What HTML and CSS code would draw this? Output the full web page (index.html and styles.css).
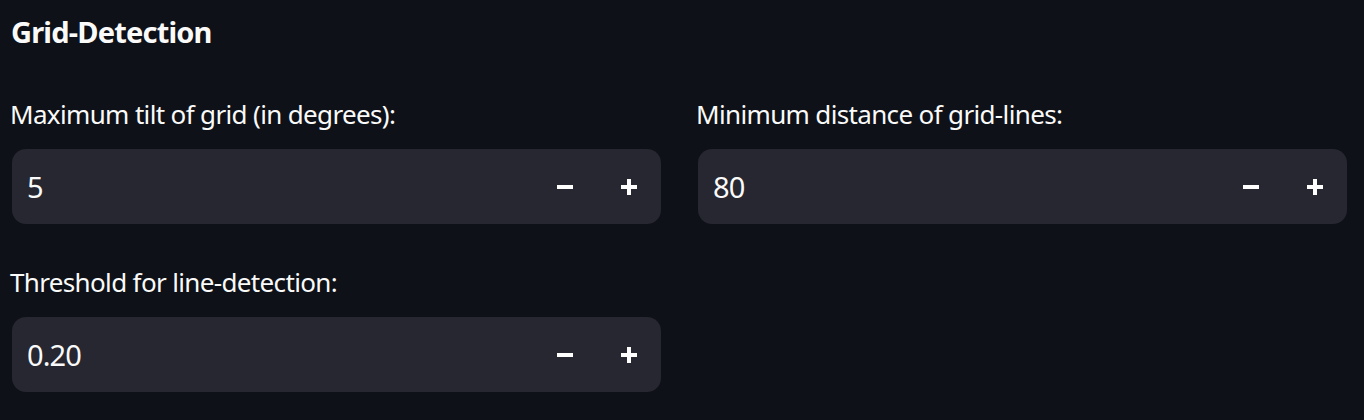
FILE: index.html
```html
<!DOCTYPE html>
<html>
<head>
<meta charset="utf-8">
<link rel="stylesheet" href="styles.css">
</head>
<body>
<div class="page">
  <h2 class="title">Grid-Detection</h2>
  <div class="grid">
    <div class="field">
      <label class="label">Maximum tilt of grid (in degrees):</label>
      <div class="input">
        <span class="value">5</span>
        <div class="steps">
          <button class="step"><svg width="16" height="16" viewBox="0 0 16 16"><rect x="0" y="6" width="16" height="4" fill="#fff"/></svg></button>
          <button class="step"><svg width="16" height="16" viewBox="0 0 16 16"><rect x="0" y="6" width="16" height="4" fill="#fff"/><rect x="6" y="0" width="4" height="16" fill="#fff"/></svg></button>
        </div>
      </div>
    </div>
    <div class="field">
      <label class="label">Minimum distance of grid-lines:</label>
      <div class="input">
        <span class="value">80</span>
        <div class="steps">
          <button class="step"><svg width="16" height="16" viewBox="0 0 16 16"><rect x="0" y="6" width="16" height="4" fill="#fff"/></svg></button>
          <button class="step"><svg width="16" height="16" viewBox="0 0 16 16"><rect x="0" y="6" width="16" height="4" fill="#fff"/><rect x="6" y="0" width="4" height="16" fill="#fff"/></svg></button>
        </div>
      </div>
    </div>
    <div class="field">
      <label class="label">Threshold for line-detection:</label>
      <div class="input">
        <span class="value">0.20</span>
        <div class="steps">
          <button class="step"><svg width="16" height="16" viewBox="0 0 16 16"><rect x="0" y="6" width="16" height="4" fill="#fff"/></svg></button>
          <button class="step"><svg width="16" height="16" viewBox="0 0 16 16"><rect x="0" y="6" width="16" height="4" fill="#fff"/><rect x="6" y="0" width="4" height="16" fill="#fff"/></svg></button>
        </div>
      </div>
    </div>
  </div>
</div>
</body>
</html>
```
FILE: styles.css
```css
html, body {
  margin: 0;
  padding: 0;
  background: #0e1117;
  height: 100%;
}
.page {
  padding: 12px 0 0 12px;
  font-family: "Noto Sans", "Open Sans", sans-serif;
  color: #fafafa;
}
.title {
  margin: 0 0 0 -1px;
  font-size: 29px;
  font-weight: 700;
  line-height: 40px;
  height: 40px;
  letter-spacing: -0.8px;
}
.grid {
  margin-top: 41px;
  display: grid;
  grid-template-columns: 649px 649px;
  column-gap: 37px;
  row-gap: 37px;
}
.field {
  display: flex;
  flex-direction: column;
  gap: 15px;
}
.label {
  margin-left: -2px;
  padding-top: 2px;
  font-size: 26px;
  line-height: 39px;
  height: 39px;
  color: #fafafa;
  letter-spacing: -0.65px;
  white-space: nowrap;
}
.input {
  height: 75px;
  border-radius: 14px;
  background: #262730;
  display: flex;
  align-items: center;
  justify-content: space-between;
  padding-left: 15px;
  padding-right: 0;
  box-sizing: border-box;
}
.value {
  font-size: 29px;
  line-height: 40px;
  letter-spacing: -0.9px;
}
.steps {
  display: flex;
}
.step {
  background: none;
  border: none;
  padding: 0;
  width: 64px;
  height: 40px;
  display: flex;
  align-items: center;
  justify-content: center;
  cursor: pointer;
}
.step svg {
  display: block;
}
```
